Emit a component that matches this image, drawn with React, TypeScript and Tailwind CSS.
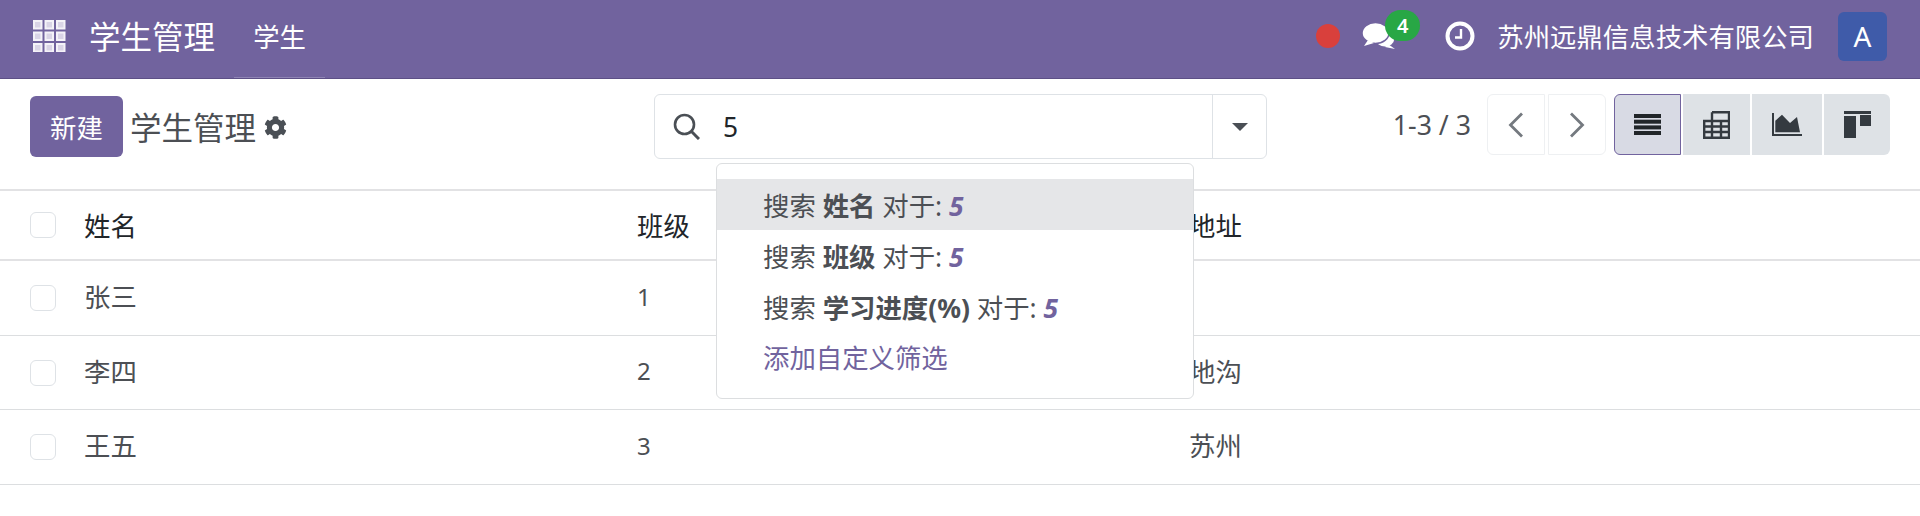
import React from 'react';
import { FaCog } from 'react-icons/fa';

const GridIcon = () => (
  <svg width="33" height="32" viewBox="0 0 33 32" className="shrink-0">
    {[0, 11.5, 23].map((x) =>
      [0, 11.5, 23].map((y) => (
        <g key={`${x}-${y}`}>
          <rect x={x} y={y} width="9.5" height="9.5" fill="#f4f2f8" />
          <rect x={x + 2} y={y + 2} width="5.5" height="5.5" fill="#d9d4e6" />
        </g>
      )),
    )}
  </svg>
);

const ChatIcon = () => (
  <svg width="34" height="28" viewBox="0 0 34 28">
    <ellipse cx="23" cy="18" rx="9" ry="6.5" fill="#fff" />
    <path d="M26 22l7 5-10-2z" fill="#fff" />
    <ellipse cx="13.5" cy="11" rx="13.5" ry="10.5" fill="#fff" stroke="#71639e" strokeWidth="1.5" />
    <path d="M6 18l-4 6 10-3z" fill="#fff" />
  </svg>
);

const ClockIcon = () => (
  <svg width="30" height="30" viewBox="0 0 30 30">
    <circle cx="15" cy="15" r="12.5" fill="none" stroke="#fff" strokeWidth="4" />
    <path d="M16 8v8.5H10" fill="none" stroke="#fff" strokeWidth="2.4" />
  </svg>
);

const SearchIcon = () => (
  <svg width="27" height="27" viewBox="0 0 27 27" fill="none" stroke="#4a4f55" strokeWidth="2.6">
    <circle cx="11.5" cy="11.5" r="9.5" />
    <path d="M18.5 18.5 26 26" strokeWidth="3" />
  </svg>
);

const ListIcon = () => (
  <svg width="27" height="21" viewBox="0 0 27 21" fill="#212529">
    <rect width="27" height="4" />
    <rect y="5.7" width="27" height="4" />
    <rect y="11.4" width="27" height="4" />
    <rect y="17" width="27" height="4" />
  </svg>
);

const PivotIcon = () => (
  <svg width="27" height="28" viewBox="0 0 27 28" fill="none" stroke="#343a40" strokeWidth="2.4">
    <path d="M9 1.2h17v25.6H1.2V10H26M9 1.2v25.6M18 10v17M1 15.5h25M1 21h25" />
  </svg>
);

const GraphIcon = () => (
  <svg width="30" height="23" viewBox="0 0 30 23" fill="#343a40">
    <path d="M0 0h2v21h28v2H0z" />
    <path d="M3.3 19.3V7.7L10 1.7l8 8.3 7-6 3 15.3z" />
  </svg>
);

const KanbanIcon = () => (
  <svg width="27" height="27" viewBox="0 0 27 27" fill="#343a40">
    <rect width="27" height="3" />
    <rect y="5" width="12" height="22" />
    <rect x="16" y="4" width="11" height="11" />
  </svg>
);

const Chevron = ({ dir }: { dir: 'left' | 'right' }) => (
  <svg width="16" height="26" viewBox="0 0 16 26" fill="none" stroke="#74797f" strokeWidth="2.8">
    <path d={dir === 'left' ? 'M14 1.5 2.5 13 14 24.5' : 'M2 1.5 13.5 13 2 24.5'} />
  </svg>
);

const Checkbox = () => (
  <span className="block h-[26px] w-[26px] rounded-[6px] border border-[#dee2e6] bg-white" />
);

const rows = [
  { name: '张三', cls: '1', addr: '', h: 'h-[75px]' },
  { name: '李四', cls: '2', addr: '地沟', h: 'h-[74px]' },
  { name: '王五', cls: '3', addr: '苏州', h: 'h-[75px]' },
];

const suggestions = ['姓名', '班级', '学习进度(%)'];

const App = () => {
  return (
    <div
      className="h-[516px] w-[1920px] overflow-hidden bg-white text-[26.4px] leading-none text-[#4c4f54]"
      style={{ fontFamily: '"Noto Sans", "Noto Sans CJK SC", sans-serif' }}
    >
      <header className="flex h-[79px] items-center border-b border-[#5d5086] bg-[#71639e] pb-[6px] pl-[33px] pr-[33px] text-white">
        <GridIcon />
        <span className="ml-[23px] pt-[2px] text-[31.5px]">学生管理</span>
        <span className="-mb-[6px] ml-[19px] flex h-[78px] w-[91px] items-center justify-center border-b border-[#8f84b4] pb-[3px]">
          学生
        </span>
        <div className="ml-auto flex items-center">
          <span className="h-[24px] w-[24px] rounded-full bg-[#d9403c]" />
          <div className="relative ml-[22px] flex h-[30px] w-[58px] items-center">
            <ChatIcon />
            <span className="absolute left-[23px] top-[-11px] flex h-[31px] w-[35px] items-center justify-center rounded-full bg-[#28a745] text-[20px] font-semibold">
              4
            </span>
          </div>
          <div className="ml-[25px]">
            <ClockIcon />
          </div>
          <span className="ml-[22px] pt-[2px]">苏州远鼎信息技术有限公司</span>
          <span className="ml-[24px] flex h-[49px] w-[49px] items-center justify-center rounded-[6px] bg-[#3f5ba9] text-[28px]">
            A
          </span>
        </div>
      </header>

      <section className="relative flex h-[112px] items-start border-b-2 border-[#e2e2e4] pl-[30px] pr-[30px] pt-[16px]">
        <button
          type="button"
          className="mt-[1px] flex h-[61px] w-[93px] items-center justify-center rounded-[6px] bg-[#71639e] pt-[3px] text-white"
        >
          新建
        </button>
        <span className="ml-[7px] mt-[17px] text-[31.5px]">学生管理</span>
        <FaCog size={23} color="#4a4f55" className="ml-[8px] mt-[21px]" />

        <div className="-mt-[1px] ml-[367px] flex h-[65px] w-[613px] items-center rounded-[6px] border border-[#dee2e6] bg-white">
          <div className="flex flex-1 items-center pl-[18px]">
            <SearchIcon />
            <span className="ml-[23px] pt-[2px] text-[#212529]">5</span>
          </div>
          <div className="flex h-full w-[54px] items-center justify-center border-l border-[#dee2e6]">
            <span className="h-0 w-0 border-x-[8px] border-t-[8px] border-x-transparent border-t-[#4a4f55]" />
          </div>
        </div>

        <div className="ml-auto mt-[-1px] flex items-center">
          <span className="mr-[16px] pt-[2px] text-[26.7px]">1-3 / 3</span>
          <div className="flex h-[61px] gap-[3px]">
            <button type="button" className="flex w-[58px] items-center justify-center rounded-l-[6px] border border-[#eef0f2]">
              <Chevron dir="left" />
            </button>
            <button type="button" className="flex w-[58px] items-center justify-center rounded-r-[6px] border border-[#eef0f2]">
              <Chevron dir="right" />
            </button>
          </div>
          <div className="ml-[8px] flex h-[61px] gap-[2px]">
            <button type="button" className="flex w-[67px] items-center justify-center rounded-l-[6px] border border-[#71639e] bg-[#d8dae4]">
              <ListIcon />
            </button>
            <button type="button" className="flex w-[67px] items-center justify-center bg-[#dee2e6]">
              <PivotIcon />
            </button>
            <button type="button" className="flex w-[70px] items-center justify-center bg-[#dee2e6]">
              <GraphIcon />
            </button>
            <button type="button" className="flex w-[66px] items-center justify-center rounded-r-[6px] bg-[#dee2e6]">
              <KanbanIcon />
            </button>
          </div>
        </div>

        <div className="absolute left-[716px] top-[84px] z-10 w-[478px] rounded-[6px] border border-[#dcdee0] bg-white pb-[15px] pt-[15px]">
          {suggestions.map((label, i) => (
            <div
              key={label}
              className={`flex h-[51px] items-center whitespace-pre pl-[46px] pt-[3px] ${i === 0 ? 'bg-[#e5e6e8]' : ''}`}
            >
              搜索 <b className="font-bold">{label}</b> 对于: <b className="font-bold italic text-[#71639e]">5</b>
            </div>
          ))}
          <div className="flex h-[51px] items-center pl-[46px] pt-[2px] text-[#71639e]">添加自定义筛选</div>
        </div>
      </section>

      <div className="flex h-[70px] items-center border-b-2 border-[#e2e2e4] pl-[30px] text-[#212529]">
        <Checkbox />
        <span className="ml-[28px] w-[553px] pt-[2px]">姓名</span>
        <span className="w-[552px] pt-[2px]">班级</span>
        <span className="pt-[2px]">地址</span>
      </div>

      {rows.map((row) => (
        <div key={row.name} className={`flex items-center border-b border-[#dcdee0] pl-[30px] ${row.h}`}>
          <Checkbox />
          <span className="ml-[28px] w-[553px] pb-[1px]">{row.name}</span>
          <span className="w-[552px] pb-[3px] text-[24px]">{row.cls}</span>
          <span className="pb-[1px]">{row.addr}</span>
        </div>
      ))}
    </div>
  );
};

export default App;
